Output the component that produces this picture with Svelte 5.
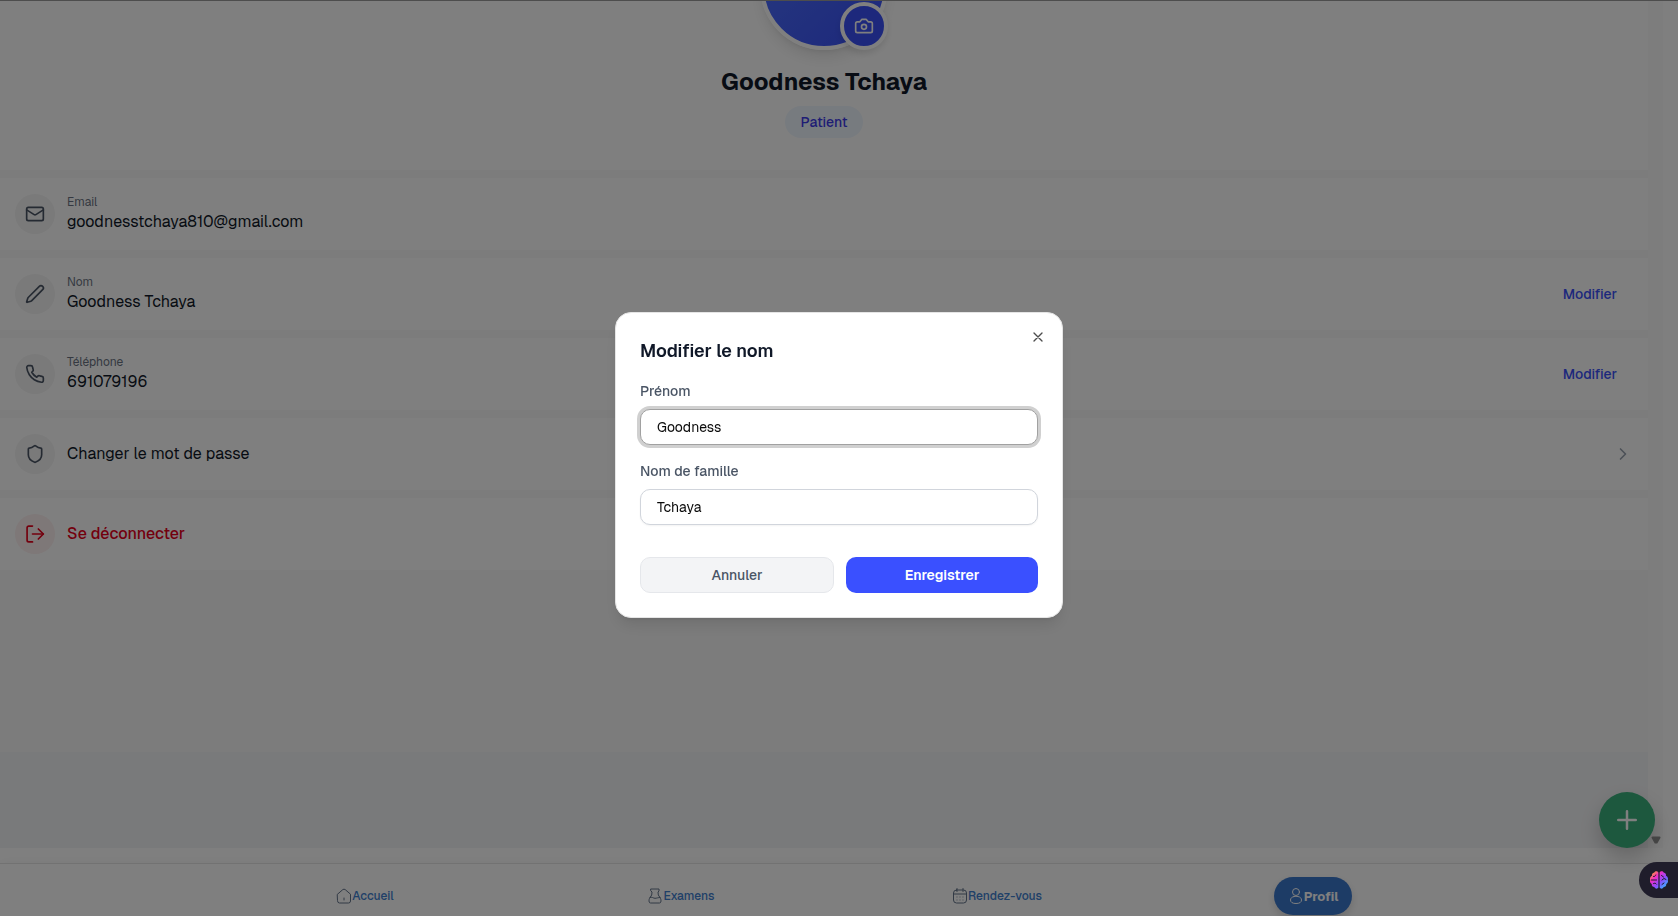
<script lang="ts">
	interface Row {
		icon: string;
		label?: string;
		value: string;
		action?: 'edit' | 'open';
		danger?: boolean;
	}

	const rows: Row[] = [
		{ icon: 'mail', label: 'Email', value: 'goodnesstchaya810@gmail.com' },
		{ icon: 'pen', label: 'Nom', value: 'Goodness Tchaya', action: 'edit' },
		{ icon: 'phone', label: 'Téléphone', value: '691079196', action: 'edit' },
		{ icon: 'shield', value: 'Changer le mot de passe', action: 'open' },
		{ icon: 'logout', value: 'Se déconnecter', danger: true },
	];

	const icons: Record<string, string[]> = {
		mail: [
			'M4 4h16a2 2 0 0 1 2 2v12a2 2 0 0 1-2 2H4a2 2 0 0 1-2-2V6a2 2 0 0 1 2-2z',
			'm22 7-8.97 5.7a1.94 1.94 0 0 1-2.06 0L2 7',
		],
		pen: ['M21.174 6.812a1 1 0 0 0-3.986-3.987L3.842 16.174a2 2 0 0 0-.5.83l-1.321 4.352a.5.5 0 0 0 .623.622l4.353-1.32a2 2 0 0 0 .83-.497z'],
		phone: ['M22 16.92v3a2 2 0 0 1-2.18 2 19.79 19.79 0 0 1-8.63-3.07 19.5 19.5 0 0 1-6-6 19.79 19.79 0 0 1-3.07-8.67A2 2 0 0 1 4.11 2h3a2 2 0 0 1 2 1.72 12.84 12.84 0 0 0 .7 2.81 2 2 0 0 1-.45 2.11L8.09 9.91a16 16 0 0 0 6 6l1.27-1.27a2 2 0 0 1 2.11-.45 12.84 12.84 0 0 0 2.81.7A2 2 0 0 1 22 16.92z'],
		shield: ['M20 13c0 5-3.5 7.5-7.66 8.95a1 1 0 0 1-.67-.01C7.5 20.5 4 18 4 13V6a1 1 0 0 1 1-1c2 0 4.5-1.2 6.24-2.72a1.17 1.17 0 0 1 1.52 0C14.51 3.81 17 5 19 5a1 1 0 0 1 1 1z'],
		logout: ['M9 21.5H4.5a2 2 0 0 1-2-2v-15a2 2 0 0 1 2-2H9', 'M9 12h13', 'm16 6 6 6-6 6'],
	};

	let firstName = $state('Goodness');
	let lastName = $state('Tchaya');
	let open = $state(true);

	const fullName = 'Goodness Tchaya';
</script>

<div class="app">
	<div class="viewport">
		<main class="profile">
			<header class="hero">
				<div class="avatar-wrap">
					<div class="avatar"></div>
					<button class="camera" aria-label="Changer la photo">
						<svg viewBox="0 0 24 24">
							<path d="M14.5 4h-5L7 7H4a2 2 0 0 0-2 2v9a2 2 0 0 0 2 2h16a2 2 0 0 0 2-2V9a2 2 0 0 0-2-2h-3z" />
							<circle cx="12" cy="13" r="3" />
						</svg>
					</button>
				</div>
				<h1>{fullName}</h1>
				<span class="role">Patient</span>
			</header>

			{#each rows as row}
				<section class="row" class:danger={row.danger}>
					<span class="row-icon">
						<svg viewBox="0 0 24 24">
							{#each icons[row.icon] as d}
								<path {d} />
							{/each}
						</svg>
					</span>
					<div class="row-text">
						{#if row.label}
							<span class="row-label">{row.label}</span>
						{/if}
						<span class="row-value">{row.value}</span>
					</div>
					{#if row.action === 'edit'}
						<button class="edit" onclick={() => (open = true)}>Modifier</button>
					{:else if row.action === 'open'}
						<button class="chevron" aria-label="Ouvrir">
							<svg viewBox="0 0 24 24"><path d="m9 18 6-6-6-6" /></svg>
						</button>
					{/if}
				</section>
			{/each}
			<div class="spacer"></div>
			<div class="page-end"></div>
		</main>
		<div class="gutter"></div>
	</div>

	<nav class="tabs">
		<div class="tabs-inner">
			<a href="#accueil">
				<svg viewBox="0 0 16 16">
					<path d="M1.5 6.2 6.8 1.6a2 2 0 0 1 2.4 0l5.3 4.6v6.8a2 2 0 0 1-2 2h-9a2 2 0 0 1-2-2z" />
					<path d="M8 10v2" />
				</svg>
				Accueil
			</a>
			<a href="#examens">
				<svg viewBox="0 0 16 16">
					<path d="M4 1h8v2l-1 1 .3 3 1.7 2.500c1 1.500 1.200 3 .8 4.500-.2.700-.7 1-1.300 1h-9c-.6 0-1.100-.3-1.300-1-.4-1.500-.2-3 .8-4.500L4.700 7 5 4 4 3z" />
					<path d="M3 9.500c2-1 3.400.8 5 .8s3-.8 5-.8" />
				</svg>
				Examens
			</a>
			<a href="#rendez-vous">
				<svg viewBox="0 0 16 16">
					<rect x="1.5" y="2" width="13" height="13" rx="3" />
					<path d="M5 .5v3M11 .5v3M1.5 6h13" />
					<path d="M5 9h.01M8 9h.01M11 9h.01M5 12h.01M8 12h.01M11 12h.01" />
				</svg>
				Rendez-vous
			</a>
			<a class="active" href="#profil">
				<svg viewBox="0 0 16 16">
					<circle cx="8" cy="4" r="3.5" />
					<path d="M6 8.5c-2.2.5-3.5 1.7-3.5 3.5 0 2.3 2 3.5 5.5 3.5s5.5-1.2 5.5-3.5c0-1.8-1.3-3-3.5-3.5-1.3-.3-2.7-.3-4 0z" />
				</svg>
				Profil
			</a>
		</div>
	</nav>
	<button class="fab" aria-label="Ajouter">
		<svg viewBox="0 0 24 24"><path d="M5 12h14M12 5v14" /></svg>
	</button>
	<svg class="scroll-arrow" viewBox="0 0 10 8"><path d="M1.5 1.5h7L5.7 6.500H4.300z" /></svg>
</div>

{#if open}
	<div class="overlay">
		<form class="dialog" onsubmit={(e) => e.preventDefault()}>
			<button type="button" class="close" aria-label="Fermer" onclick={() => (open = false)}>
				<svg viewBox="0 0 24 24"><path d="M18 6 6 18M6 6l12 12" /></svg>
			</button>
			<h2>Modifier le nom</h2>
			<label for="first-name">Prénom</label>
			<input id="first-name" class="focused" type="text" bind:value={firstName} />
			<label for="last-name">Nom de famille</label>
			<input id="last-name" type="text" bind:value={lastName} />
			<div class="actions">
				<button type="button" class="cancel" onclick={() => (open = false)}>Annuler</button>
				<button type="submit" class="save">Enregistrer</button>
			</div>
		</form>
	</div>
{/if}

<button class="assistant" aria-label="Assistant">
	<svg viewBox="0 0 20 20">
		<defs>
			<linearGradient id="brain" x1="0" y1="0" x2="1" y2="1">
				<stop offset="0" stop-color="#ff9a3d" />
				<stop offset=".1" stop-color="#ff9a3d" />
				<stop offset=".32" stop-color="#f12bc4" />
				<stop offset=".6" stop-color="#8b4dff" />
				<stop offset=".9" stop-color="#35b6ff" />
			</linearGradient>
		</defs>
		<path class="lobe" d="M9.4 2.5C8.5.7 6 .8 5.3 2.5 3.5 2.7 2.6 4.3 3 5.8 1.2 6.7.6 8.6 1.2 10c-.6 1.6 0 3.3 1.5 4-.1 1.8 1 3 2.6 3 .9 2 3.3 2.2 4.1.5zM10.6 2.5c.9-1.8 3.4-1.7 4.1 0 1.8.2 2.7 1.8 2.3 3.3 1.8.9 2.4 2.8 1.8 4.2.6 1.6 0 3.3-1.5 4 .1 1.8-1 3-2.6 3-.9 2-3.3 2.2-4.1.5z" />
		<path class="fold" d="M4.5 6.5c1 .2 2-.3 2.3-1.5M2.5 10h5M4.5 13.5c1-.7 2.3-.3 3 .7M12.5 5.5l2 1.5M13 10l2-1.5 2 1M13 14.5l2-1.5" />
	</svg>
</button>

<style>
	:global(body) {
		margin: 0;
		background: #fff;
		font-family: Geist, Inter, 'Noto Sans', sans-serif;
		color: #101828;
	}

	.app,
	.app * {
		box-sizing: border-box;
	}

	.app {
		position: relative;
		height: 100vh;
		display: flex;
		flex-direction: column;
		overflow: hidden;
	}

	svg {
		display: block;
		width: 20px;
		height: 20px;
		fill: none;
		stroke: currentColor;
		stroke-width: 2;
		stroke-linecap: round;
		stroke-linejoin: round;
	}

	button {
		font: inherit;
		border: 0;
		padding: 0;
		cursor: pointer;
	}

	.viewport {
		flex: 1;
		min-height: 0;
		display: flex;
		padding-bottom: 15px;
		padding-right: 15px;
	}

	.profile {
		flex: 1;
		display: flex;
		flex-direction: column;
		background: #f8f8f8;
	}

	.gutter {
		width: 15px;
		background: #fafafa;
	}

	.hero {
		display: flex;
		flex-direction: column;
		align-items: center;
		height: 170px;
		background: #fff;
	}

	.avatar-wrap {
		position: relative;
		height: 50px;
		width: 128px;
		display: flex;
		align-items: flex-end;
	}

	.avatar {
		flex: none;
		width: 128px;
		height: 128px;
		border: 4px solid #fff;
		border-radius: 50%;
		background: linear-gradient(135deg, #4f74ff, #3a50f8);
		box-shadow: 0 10px 15px -3px rgba(0, 0, 0, 0.1), 0 4px 6px -4px rgba(0, 0, 0, 0.1);
	}

	.camera {
		position: absolute;
		right: 0;
		bottom: 0;
		width: 48px;
		height: 48px;
		display: grid;
		place-items: center;
		border: 4px solid #fff;
		border-radius: 50%;
		background: #3a50f8;
		color: #fff;
		box-shadow: 0 4px 6px rgba(0, 0, 0, 0.1);
	}

	h1 {
		margin: 16px 0 8px;
		font-size: 24px;
		line-height: 32px;
		font-weight: 700;
	}

	.role {
		padding: 6px 16px;
		border-radius: 16px;
		background: #eff6ff;
		color: #3e3bea;
		font-size: 14px;
		line-height: 20px;
		font-weight: 500;
	}

	.row {
		display: flex;
		align-items: center;
		gap: 12px;
		height: 72px;
		margin-top: 8px;
		padding: 0 15px;
		background: #fff;
	}

	.row-icon {
		display: grid;
		place-items: center;
		width: 40px;
		height: 40px;
		border-radius: 50%;
		background: #f4f4f4;
		color: #4a5565;
	}

	.row-text {
		flex: 1;
		display: flex;
		flex-direction: column;
	}

	.row-label {
		font-size: 12px;
		line-height: 16px;
		color: #6a7282;
	}

	.row-value {
		font-size: 16px;
		line-height: 24px;
	}

	.danger .row-icon {
		background: #fdf0f0;
		color: #e7001c;
	}

	.danger .row-value {
		color: #e7001c;
		font-weight: 500;
	}

	.edit {
		padding: 8px 16px;
		background: none;
		color: #3a50f8;
		font-size: 14px;
		line-height: 20px;
		font-weight: 500;
	}

	.chevron {
		background: none;
		color: #99a1af;
	}

	.spacer {
		flex: 1;
	}

	.page-end {
		height: 96px;
		background: #f3f4f6;
	}

	.tabs {
		height: 53px;
		padding-top: 13px;
		border-top: 1px solid #e5e5e5;
		background: #fff;
		box-shadow: 0 -2px 10px rgba(0, 0, 0, 0.03);
	}

	.tabs-inner {
		display: grid;
		grid-template-columns: repeat(4, 1fr);
		justify-items: center;
		max-width: 1264px;
		margin: 0 auto;
	}

	.tabs a {
		display: flex;
		align-items: center;
		height: 38px;
		color: #4080d0;
		font-size: 12px;
		font-weight: 500;
		text-decoration: none;
	}

	.tabs svg {
		width: 16px;
		height: 16px;
		stroke: #64748b;
		stroke-width: 1;
	}

	.tabs .active {
		padding: 0 14px;
		border-radius: 19px;
		background: #3a78cc;
		color: #fff;
		font-size: 13px;
		font-weight: 700;
		box-shadow: 0 4px 8px rgba(0, 0, 0, 0.15);
	}

	.tabs .active svg {
		stroke: #fff;
	}

	.fab {
		position: absolute;
		right: 23px;
		bottom: 68px;
		display: grid;
		place-items: center;
		width: 56px;
		height: 56px;
		border-radius: 50%;
		background: #3ab07c;
		color: #fff;
		box-shadow: 0 10px 20px rgba(0, 0, 0, 0.2);
	}

	.fab svg {
		width: 30px;
		height: 30px;
	}

	.scroll-arrow {
		position: absolute;
		right: 17px;
		bottom: 72px;
		width: 10px;
		height: 8px;
		fill: #888;
		stroke: #888;
	}

	.overlay {
		position: fixed;
		inset: 0;
		display: grid;
		place-items: center;
		padding-top: 12px;
		box-sizing: border-box;
		border-top: 1px solid #4d4d4d;
		background: rgba(0, 0, 0, 0.5);
	}

	.dialog {
		position: relative;
		box-sizing: border-box;
		width: 448px;
		padding: 24px;
		border: 1px solid #e5e5e5;
		border-radius: 16px;
		background: #fff;
		box-shadow: 0 10px 15px -3px rgba(0, 0, 0, 0.1), 0 4px 6px -4px rgba(0, 0, 0, 0.1);
	}

	.close {
		position: absolute;
		top: 16px;
		right: 16px;
		background: none;
		color: #4d4d4d;
	}

	.close svg {
		width: 16px;
		height: 16px;
	}

	h2 {
		margin: 0 0 16px;
		font-size: 18px;
		line-height: 28px;
		font-weight: 600;
	}

	label {
		display: block;
		margin-bottom: 8px;
		color: #4a5565;
		font-size: 14px;
		line-height: 20px;
		font-weight: 500;
	}

	input {
		display: block;
		box-sizing: border-box;
		width: 100%;
		height: 36px;
		margin-bottom: 16px;
		padding: 0 16px;
		border: 1px solid #d1d5dc;
		border-radius: 10px;
		background: #fff;
		color: #0a0a0a;
		font: 400 14px/20px Geist, Inter, 'Noto Sans', sans-serif;
		outline: none;
		box-shadow: 0 1px 2px rgba(0, 0, 0, 0.05);
	}

	input.focused {
		border-color: #a1a1a1;
		box-shadow: 0 0 0 3px #d0d0d0;
	}

	.actions {
		display: flex;
		gap: 12px;
		margin-top: 32px;
	}

	.actions button {
		flex: 1;
		height: 36px;
		border-radius: 10px;
		font-size: 14px;
		line-height: 20px;
	}

	.cancel {
		border: 1px solid #e5e7eb;
		background: #f3f4f6;
		color: #4a5565;
		font-weight: 500;
	}

	.save {
		background: #3a50ff;
		color: #fff;
		font-weight: 600;
	}

	.assistant {
		position: fixed;
		right: 0;
		bottom: 18px;
		display: flex;
		align-items: center;
		width: 39px;
		height: 36px;
		padding-left: 10px;
		border-radius: 18px 0 0 18px;
		background: #1f1d2b;
	}

	.assistant .lobe {
		fill: url(#brain);
		stroke: none;
	}

	.assistant .fold {
		stroke: #1f1d2b;
		stroke-width: 1;
	}
</style>
